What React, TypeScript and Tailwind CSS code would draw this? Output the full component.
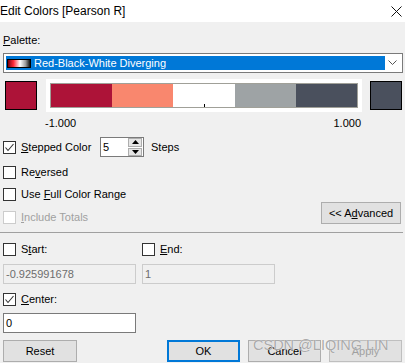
import React from 'react';

function Check({ checked, disabled }: { checked?: boolean; disabled?: boolean }) {
  return (
    <span
      className={`flex h-[13px] w-[13px] shrink-0 items-center justify-center border bg-white ${
        disabled ? 'border-[#cccccc]' : 'border-[#333333]'
      }`}
    >
      {checked && (
        <svg width="11" height="11" viewBox="0 0 11 11">
          <polyline points="1.5,5.5 4,8.5 9.5,2" fill="none" stroke="#333" strokeWidth="1.1" />
        </svg>
      )}
    </span>
  );
}

function Btn({
  children,
  className = '',
  primary,
  disabled,
}: {
  children: React.ReactNode;
  className?: string;
  primary?: boolean;
  disabled?: boolean;
}) {
  return (
    <div
      className={`flex h-[22px] items-center justify-center bg-[#e1e1e1] ${
        primary ? 'border-2 border-[#0078d7]' : 'border border-[#adadad]'
      } ${disabled ? 'text-[#a0a0a0] border-[#bfbfbf]' : 'text-black'} ${className}`}
    >
      {children}
    </div>
  );
}

export default function App() {
  const segments = ['bg-[#ad1338]', 'bg-[#f9876e]', 'bg-white', 'bg-[#9ea3a5]', 'bg-[#4a505d]'];

  return (
    <div className="relative h-[363px] w-[405px] overflow-hidden bg-[#f0f0f0] font-['Liberation_Sans',Arial,sans-serif] text-[11px] leading-[13px] text-black">
      {/* title bar */}
      <div className="flex h-[22px] items-center justify-between bg-white pr-[3px]">
        <span className="text-[12px]">Edit Colors [Pearson R]</span>
        <svg width="11" height="11" viewBox="0 0 11 11">
          <path d="M0.5 0.5 L10.5 10.5 M10.5 0.5 L0.5 10.5" stroke="#111" strokeWidth="1" />
        </svg>
      </div>

      <div className="px-[3px]">
        <div className="mt-[12px]">
          <span className="underline">P</span>alette:
        </div>

        {/* palette dropdown */}
        <div className="mt-[6px] flex h-[20px] w-[400px] items-center border border-[#7a7a7a] bg-white p-[2px]">
          <div className="flex h-[14px] w-[379px] items-center bg-[#0078d7] pl-[1px] text-white">
            <span className="h-[9px] w-[24px] border border-black bg-[linear-gradient(90deg,#7a0010,#ff2a3a_25%,#ffffff_55%,#9a9a9a_80%,#111111)]" />
            <span className="ml-[3px]">Red-Black-White Diverging</span>
          </div>
          <div className="flex flex-1 items-center justify-center">
            <svg width="9" height="6" viewBox="0 0 9 6">
              <polyline points="0.5,0.5 4.5,4.5 8.5,0.5" fill="none" stroke="#555" strokeWidth="1" />
            </svg>
          </div>
        </div>

        {/* colour bar row */}
        <div className="mt-[6px] flex items-center">
          <div className="ml-[2px] h-[29px] w-[32px] border border-black bg-[#ad1338]" />
          <div className="ml-[9px] h-[33px] w-[316px] bg-white p-[4px]">
            <div className="relative flex h-[25px] border border-[#a0a098]">
              {segments.map((c) => (
                <div key={c} className={`flex-1 ${c}`} />
              ))}
              <div className="absolute bottom-0 left-[153px] h-[3px] w-px bg-black" />
            </div>
          </div>
          <div className="ml-[8px] h-[29px] w-[32px] border border-black bg-[#4a505d]" />
        </div>

        <div className="ml-[42px] mt-[5px] flex w-[316px] justify-between">
          <span>-1.000</span>
          <span>1.000</span>
        </div>

        {/* stepped colour */}
        <div className="mt-[7px] flex h-[20px] items-center">
          <div className="flex w-[97px] items-center">
            <Check checked />
            <span className="ml-[5px]">
              <span className="underline">S</span>tepped Color
            </span>
          </div>
          <div className="flex h-[20px] w-[44px] items-center border border-[#7a7a7a] bg-white">
            <span className="ml-[2px] flex-1">5</span>
            <div className="mr-[1px] flex h-[18px] w-[14px] flex-col gap-px">
              <div className="flex flex-1 items-center justify-center border border-[#adadad] bg-[#e5e5e5]">
                <svg width="7" height="4" viewBox="0 0 7 4">
                  <polygon points="3.5,0 7,4 0,4" fill="#000" />
                </svg>
              </div>
              <div className="flex flex-1 items-center justify-center border border-[#adadad] bg-[#e5e5e5]">
                <svg width="7" height="4" viewBox="0 0 7 4">
                  <polygon points="0,0 7,0 3.5,4" fill="#000" />
                </svg>
              </div>
            </div>
          </div>
          <span className="ml-[7px]">Steps</span>
        </div>

        <div className="mt-[9px] flex h-[13px] items-center">
          <Check />
          <span className="ml-[5px]">
            Re<span className="underline">v</span>ersed
          </span>
        </div>

        <div className="mt-[9px] flex h-[13px] items-center">
          <Check />
          <span className="ml-[5px]">
            Use <span className="underline">F</span>ull Color Range
          </span>
        </div>

        <div className="mt-[3px] flex h-[20px] items-end justify-between">
          <div className="flex h-[13px] items-center text-[#a0a0a0]">
            <Check disabled />
            <span className="ml-[5px]">
              <span className="underline">I</span>nclude Totals
            </span>
          </div>
          <Btn className="mr-[1px] h-[20px] w-[80px]">
            &lt;&lt; A<span className="underline">d</span>vanced
          </Btn>
        </div>

        <div className="-ml-[3px] mt-[8px] h-px w-[403px] bg-[#a0a0a0]" />

        {/* start / end */}
        <div className="mt-[10px] flex h-[13px] items-center">
          <div className="flex w-[139px] items-center">
            <Check />
            <span className="ml-[5px]">
              S<span className="underline">t</span>art:
            </span>
          </div>
          <div className="flex items-center">
            <Check />
            <span className="ml-[5px]">
              <span className="underline">E</span>nd:
            </span>
          </div>
        </div>

        <div className="mt-[8px] flex gap-[6px]">
          <div className="flex h-[20px] w-[133px] items-center border border-[#cccccc] pl-[2px] text-[#6d6d6d]">
            -0.925991678
          </div>
          <div className="flex h-[20px] w-[133px] items-center border border-[#cccccc] pl-[2px] text-[#6d6d6d]">
            1
          </div>
        </div>

        <div className="mt-[9px] flex h-[13px] items-center">
          <Check checked />
          <span className="ml-[5px]">
            <span className="underline">C</span>enter:
          </span>
        </div>

        <div className="mt-[7px] flex h-[20px] w-[133px] items-center border border-[#7a7a7a] bg-white pl-[2px]">
          0
        </div>

        {/* buttons */}
        <div className="mt-[7px] flex items-center">
          <Btn className="w-[74px]">Reset</Btn>
          <div className="ml-auto flex gap-[8px]">
            <Btn primary className="w-[73px]">
              OK
            </Btn>
            <Btn className="w-[73px]">Cancel</Btn>
            <Btn disabled className="w-[73px]">
              Apply
            </Btn>
          </div>
        </div>
      </div>

      {/* watermark */}
      <div className="pointer-events-none absolute left-[253px] top-[337px] text-[14.5px] leading-[17px] text-[#a0a0a0]/90 [text-shadow:0_0_1px_#ffffff]">
        CSDN @LIQING LIN
      </div>
    </div>
  );
}
